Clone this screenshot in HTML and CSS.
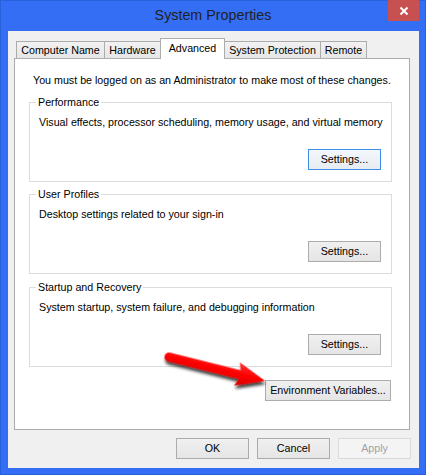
FILE: index.html
```html
<!DOCTYPE html>
<html lang="en">
<head>
<meta charset="utf-8">
<title>System Properties</title>
<link rel="stylesheet" href="styles.css">
</head>
<body>
<div class="window">
  <div class="titlebar">
    <span class="title">System Properties</span>
    <div class="close">
      <svg width="10" height="10" viewBox="0 0 10 10"><path d="M1.5 1.5 L8.5 8.5 M8.5 1.5 L1.5 8.5" stroke="#fff" stroke-width="2" fill="none"/></svg>
    </div>
  </div>
  <div class="client">
    <div class="tabs">
      <div class="tab tab-cn">Computer Name</div>
      <div class="tab tab-hw">Hardware</div>
      <div class="tab tab-adv active">Advanced</div>
      <div class="tab tab-sp">System Protection</div>
      <div class="tab tab-rm">Remote</div>
    </div>
    <div class="panel">
      <div class="note">You must be logged on as an Administrator to make most of these changes.</div>
      <div class="group">
        <div class="legend">Performance</div>
        <div class="desc">Visual effects, processor scheduling, memory usage, and virtual memory</div>
        <div class="actions"><button class="btn focused">Settings...</button></div>
      </div>
      <div class="group">
        <div class="legend">User Profiles</div>
        <div class="desc">Desktop settings related to your sign-in</div>
        <div class="actions"><button class="btn">Settings...</button></div>
      </div>
      <div class="group group-last">
        <div class="legend">Startup and Recovery</div>
        <div class="desc">System startup, system failure, and debugging information</div>
        <div class="actions"><button class="btn">Settings...</button></div>
      </div>
      <div class="env-row"><button class="btn btn-env">Environment Variables...</button></div>
    </div>
    <div class="dialog-buttons">
      <button class="btn">OK</button>
      <button class="btn">Cancel</button>
      <button class="btn" disabled>Apply</button>
    </div>
  </div>
  <svg class="arrow" width="120" height="60" viewBox="0 0 120 60">
    <defs>
      <filter id="shadow" x="-20%" y="-40%" width="150%" height="200%">
        <feDropShadow dx="1.5" dy="3" stdDeviation="1.6" flood-color="#000" flood-opacity="0.75"/>
      </filter>
      <linearGradient id="red" x1="0" y1="0" x2="0" y2="1">
        <stop offset="0" stop-color="#ff3a3a"/>
        <stop offset="0.45" stop-color="#ff0000"/>
        <stop offset="1" stop-color="#d80000"/>
      </linearGradient>
    </defs>
    <g transform="translate(9 17) rotate(14)" filter="url(#shadow)">
      <path d="M0 -4.5 L73 -4.5 L70 -12 L99 0 L70 12 L73 4.5 L0 4.5 A4.5 4.5 0 0 1 0 -4.5 Z" fill="url(#red)"/>
    </g>
  </svg>
</div>
</body>
</html>
```
FILE: styles.css
```css
html, body {
  margin: 0;
  padding: 0;
  background: #336ef5;
}

body {
  font-family: "Liberation Sans", Arial, sans-serif;
  font-size: 10.7px;
  color: #000;
}

.window {
  position: relative;
  width: 426px;
  height: 475px;
  box-sizing: border-box;
  background: #336ef5;
  border: 1px solid #2b60dc;
  display: flex;
  flex-direction: column;
}

.titlebar {
  height: 30px;
  line-height: 29px;
  text-align: center;
  flex: none;
}

.title {
  font-size: 14.3px;
  color: #222;
}

.close {
  position: absolute;
  top: -1px;
  right: 6px;
  width: 31px;
  height: 21px;
  background: #c75050;
  display: flex;
  align-items: center;
  justify-content: center;
}

.close svg {
  display: block;
}

.client {
  flex: 1;
  margin: 0 6px 6px 7px;
  padding: 7px 9px 9px 6px;
  background: #f0f0f0;
  display: flex;
  flex-direction: column;
}

.tabs {
  display: flex;
  align-items: flex-end;
  margin-left: 2px;
  height: 20px;
}

.tab {
  box-sizing: border-box;
  height: 17px;
  line-height: 16px;
  text-align: center;
  border: 1px solid #acacac;
  border-bottom: none;
  background: linear-gradient(#f2f2f2, #e6e6e6);
  margin-left: -1px;
  white-space: nowrap;
}

.tab:first-child {
  margin-left: 0;
}

.tab-cn { width: 89px; }
.tab-hw { width: 57px; }
.tab-adv { width: 65px; }
.tab-sp { width: 97px; }
.tab-rm { width: 47px; }

.tab.active {
  position: relative;
  z-index: 1;
  height: 21px;
  margin-bottom: -1px;
  line-height: 18px;
  padding-bottom: 2px;
  background: #fff;
}

.panel {
  background: #fff;
  border: 1px solid #acacac;
  padding: 14px 17px 28px 14px;
}

.note {
  line-height: 14px;
  margin-left: 4px;
  margin-bottom: 15px;
  white-space: nowrap;
}

.group {
  border: 1px solid #dcdcdc;
  padding: 0 10px 11px 9px;
  margin-bottom: 12px;
}

.group-last {
  margin-top: 13px;
  margin-bottom: 13px;
}

.legend {
  width: fit-content;
  margin: -7px 0 0 -3px;
  padding: 0 2px;
  line-height: 13px;
  background: #fff;
  white-space: nowrap;
}

.desc {
  margin-top: 6px;
  line-height: 14px;
  white-space: nowrap;
}

.actions {
  margin-top: 20px;
  display: flex;
  justify-content: flex-end;
}

.env-row {
  display: flex;
  justify-content: flex-end;
  margin-right: 1px;
}

.btn {
  box-sizing: border-box;
  width: 73px;
  height: 21px;
  padding: 0;
  border: 1px solid #acacac;
  background: linear-gradient(#f0f0f0, #e5e5e5);
  font-family: inherit;
  font-size: 10.7px;
  line-height: 19px;
  color: #000;
  text-align: center;
}

.btn.focused {
  border-color: #3c8ee6;
  background: linear-gradient(#f4f8fd, #e7ecf2);
}

.btn-env {
  width: 126px;
}

.btn:disabled {
  border-color: #d9d9d9;
  background: #f4f4f4;
  color: #a2a2a2;
}

.dialog-buttons {
  margin-top: 8px;
  margin-right: -1px;
  display: flex;
  justify-content: flex-end;
  gap: 8px;
}

.arrow {
  position: absolute;
  left: 159px;
  top: 339px;
  overflow: visible;
}
```
